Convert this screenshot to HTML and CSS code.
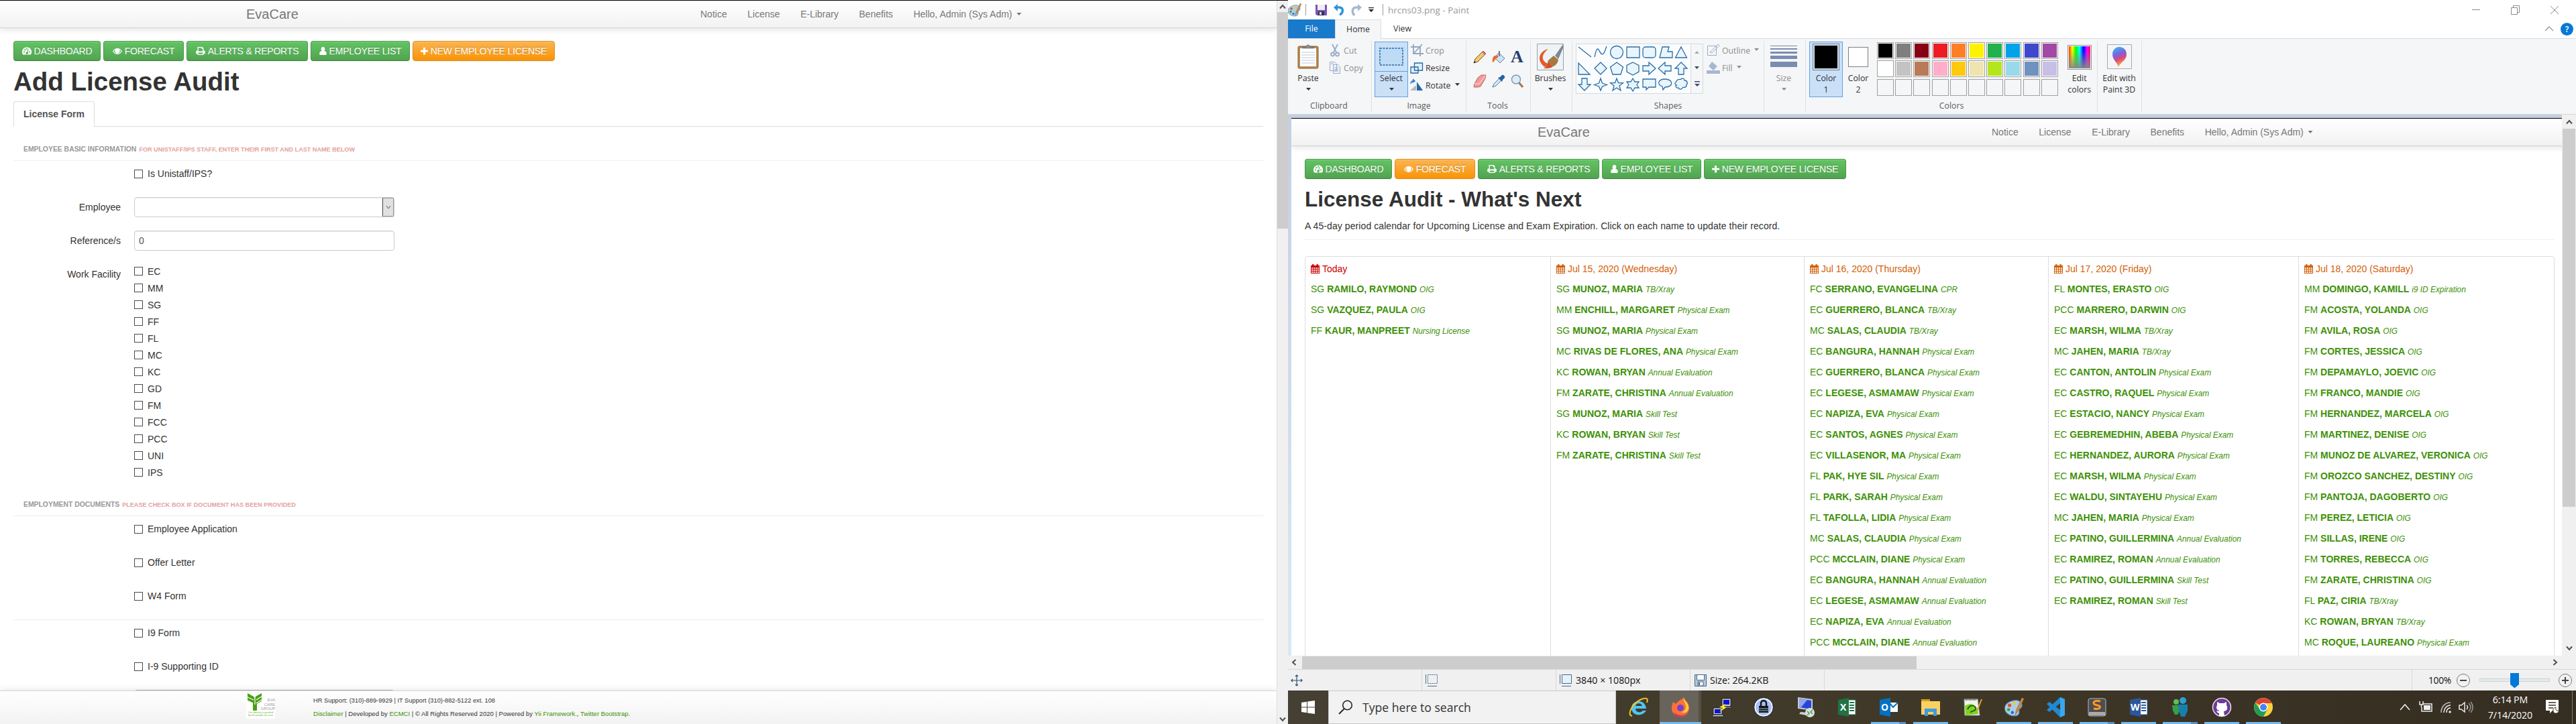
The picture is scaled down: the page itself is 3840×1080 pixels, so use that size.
FILE: index.html
```html
<!DOCTYPE html>
<html lang="en">
<head>
<meta charset="utf-8">
<title>EvaCare</title>
<link rel="stylesheet" href="styles.css">
</head>
<body>
<svg class="defs" width="0" height="0">
  <symbol id="i-dash" viewBox="0 0 14 14"><path fill="currentColor" fill-rule="evenodd" d="M7 1.5A7 7 0 0 0 1.2 12.500h11.600A7 7 0 0 0 7 1.500zM2 7.500h1.800v1.800H2zM3.300 4.300h1.900v1.900H3.300zM6.100 2.800h1.800v1.900H6.100zM10.200 7.500H12v1.800h-1.800zM8.900 4.100l1 .3-1.700 4.300a1.700 1.700 0 1 1-1-.3z"/></symbol>
  <symbol id="i-eye" viewBox="0 0 14 14"><path fill="currentColor" fill-rule="evenodd" d="M0 7.500C1.500 4.800 4 3 7 3s5.500 1.800 7 4.500C12.500 10.200 10 12 7 12S1.500 10.200 0 7.500zM1.300 7.500c1.200 2 3.200 3.400 5.700 3.400s4.500-1.400 5.700-3.400c-.7-1.200-1.600-2.100-2.700-2.700a3.700 3.700 0 1 1-6 0C2.900 5.400 2 6.300 1.300 7.500z"/></symbol>
  <symbol id="i-print" viewBox="0 0 14 14"><path fill="currentColor" fill-rule="evenodd" d="M2.500 1h7l2 2v3.500h.8c.9 0 1.500.6 1.500 1.500v3.300h-2.300V13h-9v-1.700H.2V8c0-.9.6-1.500 1.500-1.500h.8zM3.800 2.200v5.200h6.400V4H8.500V2.200zM3.800 9.500v2.300h6.400V9.500z"/></symbol>
  <symbol id="i-user" viewBox="0 0 11 14"><path fill="currentColor" d="M5.500 1C7.400 1 8.300 2.300 8.300 4c0 1.300-.5 2.400-1.200 3C9.500 7.200 10.800 8.600 10.800 11c0 1.400-.6 2-1.800 2H2C.8 13 .2 12.400.2 11 .2 8.600 1.500 7.200 3.900 7 3.200 6.400 2.700 5.300 2.700 4c0-1.700.9-3 2.800-3z"/></symbol>
  <symbol id="i-plus" viewBox="0 0 11 14"><path fill="currentColor" d="M4 2h3v3.800h4v2.800H7v3.900H4V8.600H0V5.800h4z"/></symbol>
  <symbol id="i-cal" viewBox="0 0 13 14"><path fill="currentColor" fill-rule="evenodd" d="M0 2h2V.3h2.600V2h3.800V.3H11V2h2v12H0zM1.100 5.200v1.900h2V5.200zm3 0v1.900h2V5.200zm3 0v1.900h2V5.200zm3 0v1.900h1.800V5.200zM1.100 8v2h2V8zm3 0v2h2V8zm3 0v2h2V8zm3 0v2h1.800V8zM1.100 11v2h2v-2zm3 0v2h2v-2zm3 0v2h2v-2zm3 0v2h1.800v-2z"/></symbol>
  <symbol id="i-up" viewBox="0 0 10 8"><path d="M1 6.500 5 2l4 4.500" fill="none" stroke="#505050" stroke-width="2"/></symbol>
  <symbol id="i-down" viewBox="0 0 10 8"><path d="M1 1.500 5 6l4-4.500" fill="none" stroke="#505050" stroke-width="2"/></symbol>
  <symbol id="i-tri" viewBox="0 0 7 4"><path d="M0 0h7L3.500 4z" fill="currentColor"/></symbol>
  <symbol id="i-palette" viewBox="0 0 20 20"><path d="M9 3c5-1 9 1 9 5 0 3-3 3-3 5s1 6-5 6S0 15 0 11s4-7 9-8z" fill="#a9cfe8" stroke="#5d8cad" stroke-width=".8"/><circle cx="5" cy="8" r="1.800" fill="#e64b2c"/><circle cx="10" cy="6" r="1.700" fill="#f3c832"/><circle cx="4" cy="12.500" r="1.700" fill="#3aa14a"/><circle cx="8" cy="15.500" r="1.600" fill="#3b63c9"/><path d="M18 0l2 1-6 13-3 4 1-5z" fill="#d58a3f" stroke="#8d5a2a" stroke-width=".4"/></symbol>
</svg>

<div class="desktop">
<section class="monitor left">
  <div class="page">
    <header class="navbar">
      <span class="brand">EvaCare</span>
      <nav class="menu"><a>Notice</a><a>License</a><a>E-Library</a><a>Benefits</a><a>Hello, Admin (Sys Adm)<svg class="caret"><use href="#i-tri"/></svg></a></nav>
    </header>
    <main class="content">
      <div class="buttons">
        <a class="btn b1"><svg class="fa"><use href="#i-dash"/></svg>DASHBOARD</a>
        <a class="btn b2"><svg class="fa"><use href="#i-eye"/></svg>FORECAST</a>
        <a class="btn b3"><svg class="fa"><use href="#i-print"/></svg>ALERTS &amp; REPORTS</a>
        <a class="btn b4"><svg class="fa narrow"><use href="#i-user"/></svg>EMPLOYEE LIST</a>
        <a class="btn b5 warn"><svg class="fa narrow"><use href="#i-plus"/></svg>NEW EMPLOYEE LICENSE</a>
      </div>
      <h1>Add License Audit</h1>
      <div class="tabs"><a class="tab">License Form</a></div>
      <div class="legend">EMPLOYEE BASIC INFORMATION <small>FOR UNISTAFF/IPS STAFF, ENTER THEIR FIRST AND LAST NAME BELOW</small></div>
      <div class="check first"><i></i>Is Unistaff/IPS?</div>
      <div class="field"><label>Employee</label><div class="input select"><span class="drop"><svg><path d="M1 2l3 4 3-4" fill="none" stroke="#555"/></svg></span></div></div>
      <div class="field"><label>Reference/s</label><div class="input">0</div></div>
      <div class="facility">
        <label>Work Facility</label>
        <div class="options">
          <div class="check"><i></i>EC</div><div class="check"><i></i>MM</div><div class="check"><i></i>SG</div><div class="check"><i></i>FF</div><div class="check"><i></i>FL</div><div class="check"><i></i>MC</div><div class="check"><i></i>KC</div><div class="check"><i></i>GD</div><div class="check"><i></i>FM</div><div class="check"><i></i>FCC</div><div class="check"><i></i>PCC</div><div class="check"><i></i>UNI</div><div class="check"><i></i>IPS</div>
        </div>
      </div>
      <div class="legend second">EMPLOYMENT DOCUMENTS <small>PLEASE CHECK BOX IF DOCUMENT HAS BEEN PROVIDED</small></div>
      <div class="docs">
        <div class="check"><i></i>Employee Application</div>
        <div class="check"><i></i>Offer Letter</div>
        <div class="check"><i></i>W4 Form</div>
      </div>
      <div class="docs after">
        <div class="check"><i></i>I9 Form</div>
        <div class="check"><i></i>I-9 Supporting ID</div>
        <div class="input"></div>
      </div>
    </main>
    <footer class="footer">
      <div class="logo">
        <svg width="26" height="28" viewBox="0 0 26 28"><path d="M10 28V17L2 14V2l9 5 2 3 1-3 9-5v12l-7 4v10z" fill="#4c9e17"/><path d="M10 17l-8-4M11 12 2 8M15 17l8-5M15 12l8-5M13 9v10" stroke="#fff" stroke-width="1.200" fill="none"/></svg>
        <span class="logoname">EVA<br>CARE<br>GROUP</span>
        <span class="motto">Our identity is granted<br>by the people we care</span>
      </div>
      <div class="credits">
        <p class="support">HR Support: (310)-889-9929 | IT Support (310)-882-5122 ext. 108</p>
        <p><a>Disclaimer</a> | Developed by <a>ECMCI</a> | © All Rights Reserved 2020 | Powered by <a>Yii Framework.</a>, <a>Twitter Bootstrap.</a></p>
      </div>
    </footer>
  </div>
  <div class="vscroll browser"><svg><use href="#i-up"/></svg><b></b><svg><use href="#i-down"/></svg></div>
</section>

<section class="monitor right">
  <div class="titlebar">
    <svg width="20" height="20"><use href="#i-palette"/></svg>
    <i class="bar"></i>
    <svg class="save" width="17" height="16" viewBox="0 0 17 16"><path d="M0 0h17v16H2l-2-2z" fill="#7a55b5"/><path d="M3 0h11v8H3z" fill="#eee"/><path d="M4 10h9v6H4z" fill="#35305a"/><path d="M6 11h3v4H6z" fill="#ddd"/></svg>
    <svg class="undo" width="17" height="18" viewBox="0 0 17 18"><path d="M4 5h4c7 0 7 8 1 11" fill="none" stroke="#2c93dd" stroke-width="3.500"/><path d="M0 5 6 0v11z" fill="#2c93dd"/></svg>
    <svg class="redo" width="17" height="18" viewBox="0 0 17 18"><path d="M13 5H9C2 5 2 13 6 17" fill="none" stroke="#a9b8cf" stroke-width="3.500"/><path d="M17 5 11 0v11z" fill="#a9b8cf"/></svg>
    <svg class="more" width="8" height="7" viewBox="0 0 8 7"><path d="M0 0h8v1.200H0zM0 3h8L4 7z" fill="#222"/></svg>
    <i class="bar"></i>
    <span class="title">hrcns03.png - Paint</span>
    <svg class="winctl" width="130" height="14" viewBox="0 0 130 14" fill="none" stroke="#8b8b8b"><path d="M0 6.500h12M58.500 3.500h9v10h-9zM61.500 3V.5h9v10H68M117 1l12 12M129 1l-12 12"/></svg>
  </div>
  <div class="ribbontabs">
    <span class="rt file">File</span><span class="rt home">Home</span><span class="rt view">View</span>
    <svg class="collapse" width="14" height="8"><path d="M1 7l6-6 6 6" fill="none" stroke="#999" stroke-width="1.300"/></svg>
    <span class="help">?</span>
  </div>
  <div class="ribbon">
    <div class="group g-clip">
      <div class="tools">
        <div class="big w50"><span class="pic"><svg width="32" height="38" viewBox="0 0 32 38"><rect x="1" y="3" width="30" height="33" rx="2" fill="#b98a55" stroke="#86602f"/><path d="M4 6h24v27H4z" fill="#fff"/><path d="M6 12h20M6 16h20M6 20h20M6 24h20M6 28h20" stroke="#b8c8dc"/><path d="M8 6V4h5c0-4 6-4 6 0h5v2z" fill="#8b8f95" stroke="#555" stroke-width=".6"/></svg></span>Paste<svg class="tri"><use href="#i-tri"/></svg></div>
        <div class="stack off">
          <span><svg width="20" height="20" viewBox="0 0 20 20" fill="none" stroke="#9aabc8" stroke-width="1.800"><path d="M6 1l6 12M14 1 8 13"/><circle cx="6.500" cy="16" r="2.500"/><circle cx="13.500" cy="16" r="2.500"/></svg>Cut</span>
          <span><svg width="20" height="20" viewBox="0 0 20 20" fill="#f1f5fb" stroke="#9aabc8"><path d="M2.500 1.500h7l3 3v10h-10zM7.500 5.500h7l3 3v10h-10z"/><path d="M9 10h6M9 12.500h6M9 15h6M4 4h4"/></svg>Copy</span>
        </div>
      </div>
      <div class="caption">Clipboard</div>
    </div>
    <div class="group g-image">
      <div class="tools">
        <div class="big w50 active"><span class="pic split"><svg width="37" height="28"><rect x="1" y="1" width="34" height="25" fill="#bedbf5" stroke="#1c68a8" stroke-width="1.500" stroke-dasharray="3 1.500"/></svg></span>Select<svg class="tri"><use href="#i-tri"/></svg></div>
        <div class="stack">
          <span class="off"><svg width="20" height="20" viewBox="0 0 20 20" fill="none" stroke="#93a5c4" stroke-width="1.800"><path d="M5 1v14h15M1 5h14v14M6 14 18 1"/></svg>Crop</span>
          <span><svg width="20" height="20" viewBox="0 0 20 20" fill="#dff0fb" stroke="#2469a5" stroke-width="1.300"><path d="M1 9h11v9H1zM6.500 3h12v11h-12z"/></svg>Resize</span>
          <span><svg width="20" height="20" viewBox="0 0 20 20"><path d="M0 18h9V10z" fill="#bbb"/><path d="M10 18h9L10 5z" fill="#1d6ba8"/><path d="M1 8c0-4 3-5 5-4M4 1l3 3-4 2" fill="none" stroke="#2b7bd2" stroke-width="1.500"/></svg>Rotate<svg class="tri side"><use href="#i-tri"/></svg></span>
        </div>
      </div>
      <div class="caption">Image</div>
    </div>
    <div class="group g-tools">
      <div class="toolgrid">
        <svg viewBox="0 0 20 20"><path d="M1 19l2-6L15 1l4 4L7 17z" fill="#f4c869" stroke="#6b5230"/><path d="M15 1l4 4-2 2-4-4z" fill="#dc6c63"/><path d="M1 19l1-3 2 2z" fill="#222"/></svg>
        <svg viewBox="0 0 20 20"><path d="M10 4l9 8-7 7-8-8z" fill="#cfe3f2" stroke="#5e7f9d"/><path d="M9 8c-6-1-9 2-8 10 3 0 3-6 8-7z" fill="#ea6a2e"/><path d="M11 9V1" stroke="#6b7b90" stroke-width="2"/></svg>
        <span class="glyph">A</span>
        <svg viewBox="0 0 20 20"><path d="M7 5 12 1h7l-1 5-7 12-4 1H1l1-5z" fill="#ee9a97" stroke="#c8615f"/><path d="M2 14h7l9-12" fill="none" stroke="#f9c9c7" stroke-width="1.500"/></svg>
        <svg viewBox="0 0 20 20"><path d="M1 19l2-5 8-8 3 3-8 8z" fill="#d7e6f2" stroke="#587896"/><path d="M9 5l6 6 1-3 3-3c1-2-2-5-4-4l-3 3z" fill="#24659d"/></svg>
        <svg viewBox="0 0 20 20"><path d="M12 12l6 7" stroke="#a77448" stroke-width="3"/><circle cx="8" cy="7.500" r="6.500" fill="#d8ecfa" stroke="#8d99a8" stroke-width="1.500"/></svg>
      </div>
      <div class="caption">Tools</div>
    </div>
    <div class="group g-brush">
      <div class="tools"><div class="big w58"><span class="pic"><svg width="40" height="40" viewBox="0 0 40 40"><path d="M.5.500h39v39H.5z" fill="#eef3f7" stroke="#9aa0a6"/><path d="M17 8C4 11-2 25 12 35l6-4C3 25 9 14 17 8z" fill="#e4592b"/><path d="M39 1 27 18l5 5 7-16z" fill="#7d8894"/><path d="M25 18l7 6c-1 8-9 13-22 13 6-3 5-7 7-12z" fill="#a97842"/><path d="M10 37c6-2 6-5 7-9l6 7c-3 2-8 2-13 2z" fill="#de4b24"/></svg></span>Brushes<svg class="tri"><use href="#i-tri"/></svg></div></div>
    </div>
    <div class="group g-shapes">
      <div class="tools">
        <div class="gallery">
          <svg width="170" height="73" viewBox="0 0 170 73" fill="#e9f5fc" stroke="#2b6ea6" stroke-width="1.300">
            <path d="M3 4l19 15M27 19c4-20 6-10 9-6s5 2 9-10" fill="none"/><circle cx="60" cy="12" r="9.500"/><path d="M75 4h19v16H75z"/><rect x="99" y="4" width="19" height="16" rx="4"/><path d="M128 4h10l-2 7h7v9h-19zM156 4l8.500 16h-17z"/>
            <path d="M3 28v17h17zM36 27l9 9-9 9-9-9zM60 27l9.500 7-3.500 11H54l-3.500-11zM84 27l9 4.500v9.500l-9 5-9-5v-9.500zM99 32h9v-5l10 9-10 9v-5h-9zM141 32h-9v-5l-10 9 10 9v-5h9zM156 27l9 9h-5v9h-8v-9h-5z"/>
            <path d="M8 51h8v9h5l-9 9-9-9h5zM36 51l2.500 7 7 2.500-7 2.500-2.500 6-2.500-6-7-2.500 7-2.500zM60 51l2.500 6.500 7 .2-5.500 4.300 2 7-6-4-6 4 2-7-5.500-4.300 7-.2zM84 51l3 5h6l-3 4.500 3 4.500h-6l-3 5-3-5h-6l3-4.500-3-4.500h6zM99 52h19v12h-10l-4 4v-4h-5zM132 52c13 0 13 12 0 12l-3 4-1-5c-9-3-6-11 4-11zM149 56c0-5 6-3 7-4 2-2 5-1 5 2 5 0 5 5 3 6 1 4-3 5-5 4-2 4-6 4-7 1-5 1-4-4-3-4-3-2-3-4 0-5z"/>
          </svg>
          <span class="gscroll"><svg class="up"><use href="#i-tri"/></svg><svg class="tri"><use href="#i-tri"/></svg><svg width="8" height="8" viewBox="0 0 8 8"><path d="M0 0h8v1.500H0zM0 4h8L4 8z" fill="#3c4c68"/></svg></span>
        </div>
        <div class="stack off outline">
          <span><svg width="20" height="20" viewBox="0 0 20 20" fill="none" stroke="#9caccb"><path d="M1.500 3.500h13v14h-13zM5 13 17 1l2 2L8 14z"/></svg>Outline<svg class="tri side"><use href="#i-tri"/></svg></span>
          <span><svg width="20" height="20" viewBox="0 0 20 20" fill="#a8b6d2"><path d="M8 1l8 7-6 6-7-6zM0 14h20v5H0z"/></svg>Fill<svg class="tri side"><use href="#i-tri"/></svg></span>
        </div>
      </div>
      <div class="caption">Shapes</div>
    </div>
    <div class="group g-size">
      <div class="tools"><div class="big w58 off"><span class="pic"><svg width="40" height="36"><path d="M0 1h40v1H0zM0 5h40v2H0zM0 10h40v3H0zM0 16h40v5H0zM0 25h40v8H0z" fill="#7a8cb0"/></svg></span>Size<svg class="tri"><use href="#i-tri"/></svg></div></div>
    </div>
    <div class="group g-colors">
      <div class="tools">
        <div class="big w50 active"><span class="pic"><i class="sw color1"></i></span>Color<em>1</em></div>
        <div class="big w46"><span class="pic"><i class="sw color2"></i></span>Color<em>2</em></div>
        <div class="palette">
          <i style="background-color:#000"></i><i style="background-color:#7f7f7f"></i><i style="background-color:#880015"></i><i style="background-color:#ed1c24"></i><i style="background-color:#ff7f27"></i><i style="background-color:#fff200"></i><i style="background-color:#22b14c"></i><i style="background-color:#00a2e8"></i><i style="background-color:#3f48cc"></i><i style="background-color:#a349a4"></i>
          <i style="background-color:#fff"></i><i style="background-color:#c3c3c3"></i><i style="background-color:#b97a57"></i><i style="background-color:#ffaec9"></i><i style="background-color:#ffc90e"></i><i style="background-color:#efe4b0"></i><i style="background-color:#b5e61d"></i><i style="background-color:#99d9ea"></i><i style="background-color:#7092be"></i><i style="background-color:#c8bfe7"></i>
          <i class="e"></i><i class="e"></i><i class="e"></i><i class="e"></i><i class="e"></i><i class="e"></i><i class="e"></i><i class="e"></i><i class="e"></i><i class="e"></i>
        </div>
        <div class="big w46"><span class="pic"><i class="rainbow"></i></span>Edit<em>colors</em></div>
      </div>
      <div class="caption">Colors</div>
    </div>
    <div class="group g-3d">
      <div class="tools"><div class="big w60"><span class="pic"><svg width="37" height="38" viewBox="0 0 37 38"><defs><linearGradient id="drop" x1="0" y1="0" x2=".3" y2="1"><stop offset="0" stop-color="#35c3f4"/><stop offset=".45" stop-color="#7a62dd"/><stop offset=".7" stop-color="#e24680"/><stop offset="1" stop-color="#f6b52e"/></linearGradient></defs><path d="M.5.500h36v36H.5z" fill="#f4f5f6" stroke="#a8acb0"/><path d="M18 4c7 0 11 5 11 11 0 8-6 10-13 19 1-6-8-10-8-19C8 9 12 4 18 4z" fill="url(#drop)"/></svg></span>Edit with<em>Paint 3D</em></div></div>
    </div>
  </div>

  <div class="workspace">
    <div class="picture">
      <div class="page">
        <header class="navbar">
          <span class="brand">EvaCare</span>
          <nav class="menu"><a>Notice</a><a>License</a><a>E-Library</a><a>Benefits</a><a>Hello, Admin (Sys Adm)<svg class="caret"><use href="#i-tri"/></svg></a></nav>
        </header>
        <main class="content">
          <div class="buttons">
            <a class="btn b1"><svg class="fa"><use href="#i-dash"/></svg>DASHBOARD</a>
            <a class="btn b2 warn"><svg class="fa"><use href="#i-eye"/></svg>FORECAST</a>
            <a class="btn b3"><svg class="fa"><use href="#i-print"/></svg>ALERTS &amp; REPORTS</a>
            <a class="btn b4"><svg class="fa narrow"><use href="#i-user"/></svg>EMPLOYEE LIST</a>
            <a class="btn b5"><svg class="fa narrow"><use href="#i-plus"/></svg>NEW EMPLOYEE LICENSE</a>
          </div>
          <h2>License Audit - What's Next</h2>
          <p class="lead">A 45-day period calendar for Upcoming License and Exam Expiration. Click on each name to update their record.</p>
          <div class="calendar">
            <div class="day">
              <h3 class="today"><svg class="cal"><use href="#i-cal"/></svg>Today</h3>
              <p>SG <b>RAMILO, RAYMOND</b> <em>OIG</em></p>
              <p>SG <b>VAZQUEZ, PAULA</b> <em>OIG</em></p>
              <p>FF <b>KAUR, MANPREET</b> <em>Nursing License</em></p>
            </div>
            <div class="day">
              <h3><svg class="cal"><use href="#i-cal"/></svg>Jul 15, 2020 (Wednesday)</h3>
              <p>SG <b>MUNOZ, MARIA</b> <em>TB/Xray</em></p>
              <p>MM <b>ENCHILL, MARGARET</b> <em>Physical Exam</em></p>
              <p>SG <b>MUNOZ, MARIA</b> <em>Physical Exam</em></p>
              <p>MC <b>RIVAS DE FLORES, ANA</b> <em>Physical Exam</em></p>
              <p>KC <b>ROWAN, BRYAN</b> <em>Annual Evaluation</em></p>
              <p>FM <b>ZARATE, CHRISTINA</b> <em>Annual Evaluation</em></p>
              <p>SG <b>MUNOZ, MARIA</b> <em>Skill Test</em></p>
              <p>KC <b>ROWAN, BRYAN</b> <em>Skill Test</em></p>
              <p>FM <b>ZARATE, CHRISTINA</b> <em>Skill Test</em></p>
            </div>
            <div class="day">
              <h3><svg class="cal"><use href="#i-cal"/></svg>Jul 16, 2020 (Thursday)</h3>
              <p>FC <b>SERRANO, EVANGELINA</b> <em>CPR</em></p>
              <p>EC <b>GUERRERO, BLANCA</b> <em>TB/Xray</em></p>
              <p>MC <b>SALAS, CLAUDIA</b> <em>TB/Xray</em></p>
              <p>EC <b>BANGURA, HANNAH</b> <em>Physical Exam</em></p>
              <p>EC <b>GUERRERO, BLANCA</b> <em>Physical Exam</em></p>
              <p>EC <b>LEGESE, ASMAMAW</b> <em>Physical Exam</em></p>
              <p>EC <b>NAPIZA, EVA</b> <em>Physical Exam</em></p>
              <p>EC <b>SANTOS, AGNES</b> <em>Physical Exam</em></p>
              <p>EC <b>VILLASENOR, MA</b> <em>Physical Exam</em></p>
              <p>FL <b>PAK, HYE SIL</b> <em>Physical Exam</em></p>
              <p>FL <b>PARK, SARAH</b> <em>Physical Exam</em></p>
              <p>FL <b>TAFOLLA, LIDIA</b> <em>Physical Exam</em></p>
              <p>MC <b>SALAS, CLAUDIA</b> <em>Physical Exam</em></p>
              <p>PCC <b>MCCLAIN, DIANE</b> <em>Physical Exam</em></p>
              <p>EC <b>BANGURA, HANNAH</b> <em>Annual Evaluation</em></p>
              <p>EC <b>LEGESE, ASMAMAW</b> <em>Annual Evaluation</em></p>
              <p>EC <b>NAPIZA, EVA</b> <em>Annual Evaluation</em></p>
              <p>PCC <b>MCCLAIN, DIANE</b> <em>Annual Evaluation</em></p>
            </div>
            <div class="day">
              <h3><svg class="cal"><use href="#i-cal"/></svg>Jul 17, 2020 (Friday)</h3>
              <p>FL <b>MONTES, ERASTO</b> <em>OIG</em></p>
              <p>PCC <b>MARRERO, DARWIN</b> <em>OIG</em></p>
              <p>EC <b>MARSH, WILMA</b> <em>TB/Xray</em></p>
              <p>MC <b>JAHEN, MARIA</b> <em>TB/Xray</em></p>
              <p>EC <b>CANTON, ANTOLIN</b> <em>Physical Exam</em></p>
              <p>EC <b>CASTRO, RAQUEL</b> <em>Physical Exam</em></p>
              <p>EC <b>ESTACIO, NANCY</b> <em>Physical Exam</em></p>
              <p>EC <b>GEBREMEDHIN, ABEBA</b> <em>Physical Exam</em></p>
              <p>EC <b>HERNANDEZ, AURORA</b> <em>Physical Exam</em></p>
              <p>EC <b>MARSH, WILMA</b> <em>Physical Exam</em></p>
              <p>EC <b>WALDU, SINTAYEHU</b> <em>Physical Exam</em></p>
              <p>MC <b>JAHEN, MARIA</b> <em>Physical Exam</em></p>
              <p>EC <b>PATINO, GUILLERMINA</b> <em>Annual Evaluation</em></p>
              <p>EC <b>RAMIREZ, ROMAN</b> <em>Annual Evaluation</em></p>
              <p>EC <b>PATINO, GUILLERMINA</b> <em>Skill Test</em></p>
              <p>EC <b>RAMIREZ, ROMAN</b> <em>Skill Test</em></p>
            </div>
            <div class="day">
              <h3><svg class="cal"><use href="#i-cal"/></svg>Jul 18, 2020 (Saturday)</h3>
              <p>MM <b>DOMINGO, KAMILL</b> <em>i9 ID Expiration</em></p>
              <p>FM <b>ACOSTA, YOLANDA</b> <em>OIG</em></p>
              <p>FM <b>AVILA, ROSA</b> <em>OIG</em></p>
              <p>FM <b>CORTES, JESSICA</b> <em>OIG</em></p>
              <p>FM <b>DEPAMAYLO, JOEVIC</b> <em>OIG</em></p>
              <p>FM <b>FRANCO, MANDIE</b> <em>OIG</em></p>
              <p>FM <b>HERNANDEZ, MARCELA</b> <em>OIG</em></p>
              <p>FM <b>MARTINEZ, DENISE</b> <em>OIG</em></p>
              <p>FM <b>MUNOZ DE ALVAREZ, VERONICA</b> <em>OIG</em></p>
              <p>FM <b>OROZCO SANCHEZ, DESTINY</b> <em>OIG</em></p>
              <p>FM <b>PANTOJA, DAGOBERTO</b> <em>OIG</em></p>
              <p>FM <b>PEREZ, LETICIA</b> <em>OIG</em></p>
              <p>FM <b>SILLAS, IRENE</b> <em>OIG</em></p>
              <p>FM <b>TORRES, REBECCA</b> <em>OIG</em></p>
              <p>FM <b>ZARATE, CHRISTINA</b> <em>OIG</em></p>
              <p>FL <b>PAZ, CIRIA</b> <em>TB/Xray</em></p>
              <p>KC <b>ROWAN, BRYAN</b> <em>TB/Xray</em></p>
              <p>MC <b>ROQUE, LAUREANO</b> <em>Physical Exam</em></p>
            </div>
          </div>
        </main>
      </div>
    </div>
    <div class="vscroll paint"><svg><use href="#i-up"/></svg><b></b><svg><use href="#i-down"/></svg></div>
  </div>
  <div class="hscroll"><svg class="l"><use href="#i-up"/></svg><b></b><svg class="r"><use href="#i-up"/></svg></div>
  <div class="status">
    <div class="cell c1"><svg width="18" height="18" viewBox="0 0 18 18" fill="none" stroke="#34516f" stroke-width="1.200"><path d="M9 1v16M1 9h16M7 3l2-2 2 2M7 15l2 2 2-2M3 7 1 9l2 2M15 7l2 2-2 2"/></svg></div>
    <div class="cell"><svg width="20" height="18" viewBox="0 0 20 18" fill="none" stroke="#4a6b8d"><path d="M1.500 0v14M4 17.500h14"/><path d="M4.500.500h14v13h-14z" stroke-dasharray="2 1"/></svg></div>
    <div class="cell"><svg width="20" height="18" viewBox="0 0 20 18" fill="#e6f1fa" stroke="#4a6b8d"><path d="M1.500 0v14M4 17.500h14"/><path d="M4.500.500h14v13h-14z"/></svg>3840 × 1080px</div>
    <div class="cell c4"><svg width="18" height="18" viewBox="0 0 18 18" fill="#b4c9dc" stroke="#456789"><path d="M.5.500h17v17H.5z"/><path d="M3.500.500h11v8h-11zM5 11h8v6H5z" fill="#fff"/><path d="M7 12v4" stroke-width="2"/></svg>Size: 264.2KB</div>
    <div class="cell c5"></div>
    <div class="zoom">100%
      <svg width="174" height="26" viewBox="0 0 174 26"><g fill="#f2f2f2" stroke="#777"><circle cx="11" cy="13" r="9.500"/><circle cx="163" cy="13" r="9.500"/></g><path d="M6 13h10M158 13h10M163 8v10" stroke="#444" stroke-width="2"/><path d="M35.500 10.500h104v4h-104z" fill="#e5eaea" stroke="#ccd2d2"/><path d="M81 2h13v17l-6.500 5.500L81 19z" fill="#0078d7"/></svg>
    </div>
  </div>
  <div class="taskbar">
    <div class="start"><svg width="20" height="20" viewBox="0 0 20 20"><path d="M0 3l8-1.200v7.700H0zM9 1.600 20 0v9.500H9zM0 10.500h8v7.700L0 17zM9 10.500h11V20L9 18.400z" fill="#fff"/></svg></div>
    <div class="search"><svg width="22" height="22" viewBox="0 0 22 22"><circle cx="13.500" cy="8" r="6.800" fill="none" stroke="#222" stroke-width="1.600"/><path d="M9 13l-8 8" stroke="#222" stroke-width="1.800"/></svg>Type here to search</div>
    <div class="apps">
      <span class="app"><svg viewBox="0 0 30 30"><path d="M26 17H10c0 6 8 7 11 3h5C20 30 4 28 4 16S24 1 26 17zM10 13h10c-1-5-9-5-10 0z" fill="#4fc6f4"/><path d="M5 28C-4 27 6 8 19 3c8-3 10-1 8 5" fill="none" stroke="#f3c322" stroke-width="2"/></svg></span>
      <span class="app hot"><svg viewBox="0 0 30 30"><path d="M15 4c4-1 4-4 5-4 0 4 8 7 8 16 0 7-6 13-13 13S2 24 2 17c0-5 1-6 2-10l4 3 4-4z" fill="#ff7139"/><path d="M20 1c-1 4 2 7 3 11 1 6-2 10-7 10 8 4 12-3 11-8-1-6-5-7-7-13z" fill="#ffce3d"/><path d="M5 22c5 6 15 7 20 0-3 7-17 11-20 0z" fill="#e8265e"/><circle cx="15" cy="16" r="5" fill="#7542c8"/></svg></span>
      <span class="app"><svg viewBox="0 0 30 30"><g fill="#ccc" stroke="#222"><path d="M15 2h13v12H15zM14 14h14l2 2H17zM2 16h13v10H2zM1 26h15l2 3H1z"/></g><path d="M17 4h9v7h-9zM4 18h9v6H4z" fill="#0b12d8"/><path d="M20 10l-9 5 5 1-5 6 11-7-4-1z" fill="#ffee24"/></svg></span>
      <span class="app"><svg viewBox="0 0 30 30"><circle cx="15" cy="15" r="13" fill="#a8c0f6" stroke="#fff" stroke-width="2"/><circle cx="15" cy="15" r="14.300" fill="none" stroke="#234"/><path d="M11 14V9c0-5 8-5 8 0v5" fill="none" stroke="#14161c" stroke-width="2.500"/><path d="M8 13h14v10H8z" fill="#14161c"/><path d="M8 17h14M8 20h14" stroke="#9bb"/></svg></span>
      <span class="app"><svg viewBox="0 0 30 30"><path d="M4 0l22 3v17L4 17z" fill="#c4c7cc"/><path d="M6 2l18 3v13L6 15z" fill="#2746d6"/><path d="M6 2l12 2-9 11-3-.5z" fill="#91a5f3"/><path d="M8 22l11 1 2 5-15-3z" fill="#ccc"/><circle cx="22" cy="23" r="7" fill="#dedede"/><path d="M18 21l3 3-3 3M26 19l-3 3 3 3" fill="none" stroke="#3ba547" stroke-width="1.500"/></svg></span>
      <span class="app"><svg viewBox="0 0 30 30"><path d="M16 4h12v22H16z" fill="#fff" stroke="#207245"/><path d="M19 8h7M19 12h7M19 16h7M19 20h7" stroke="#207245" stroke-width="2"/><path d="M2 4l16-3v28L2 26z" fill="#207245"/><text x="5" y="20" class="ico">X</text></svg></span>
      <span class="app on multi"><svg viewBox="0 0 30 30"><path d="M16 8h13v14H16z" fill="#fff"/><path d="M16 8l6 7 7-7" fill="none" stroke="#0072c6" stroke-width="2"/><path d="M2 4l16-3v28L2 26z" fill="#0072c6"/><text x="4" y="20" class="ico">O</text></svg></span>
      <span class="app on"><svg viewBox="0 0 30 30"><path d="M1 3h13v4H1z" fill="#dd9a0e"/><path d="M1 6h28v20H1z" fill="#fbd062"/><path d="M6 28V17h18v11h-5v-6h-8v6z" fill="#3f9bdc"/></svg></span>
      <span class="app"><svg viewBox="0 0 30 30"><path d="M3 3h20l3 24H4z" fill="#edf3e8" stroke="#aaa"/><path d="M4 4h18" stroke="#555" stroke-width="2" stroke-dasharray="1 1"/><path d="M4 13c10-7 20 0 20 12l-19 2z" fill="#7ed321"/><path d="M8 18c4-8 12-6 12-1s-8 3-7 6" fill="none" stroke="#235d1b" stroke-width="2"/><path d="M29 3l-7 18" stroke="#eaa02a" stroke-width="2"/></svg></span>
      <span class="app on"><svg viewBox="-1 0 21 20"><use href="#i-palette" width="20" height="20"/></svg></span>
      <span class="app on"><svg viewBox="0 0 30 30"><path d="M22 0l7 3v24l-7 3L2 10l4-3 16 12V9L6 22l-4-3z" fill="#1f8ad2"/><path d="M22 0l7 3v24l-7 3z" fill="#3ba7ee"/></svg></span>
      <span class="app on multi"><svg viewBox="0 0 30 30"><rect x="2" y="2" width="26" height="26" rx="3" fill="#4e4e50" stroke="#b9b9b9"/><path d="M3 22h24v5H3z" fill="#aaa"/><path d="M20 6c-12-2-13 5-5 6s5 7-5 5" fill="none" stroke="#ff9a22" stroke-width="3"/></svg></span>
      <span class="app on"><svg viewBox="0 0 30 30"><path d="M16 4h12v22H16z" fill="#fff" stroke="#2b579a"/><path d="M19 8h7M19 12h7M19 16h7M19 20h7" stroke="#2b579a" stroke-width="2"/><path d="M2 4l16-3v28L2 26z" fill="#2b579a"/><text x="3" y="20" class="ico">W</text></svg></span>
      <span class="app on multi"><svg viewBox="0 0 30 30"><circle cx="9" cy="7" r="4" fill="#5cbf55"/><path d="M3 12h11v9l-3 5H7l-3-6z" fill="#379d49"/><circle cx="19" cy="5" r="5" fill="#2d9fd2"/><path d="M12 11h14v9l-4 9h-6l-3-9z" fill="#1680ad"/></svg></span>
      <span class="app on"><svg viewBox="0 0 30 30"><circle cx="15" cy="15" r="13.500" fill="#6e3b96" stroke="#e8e0ef" stroke-width="1.500"/><path d="M8 7l4 2h6l4-2v5c3 5 0 9-4 9l1 7h-8v-4c-3 0-3-3-4-4l4 1v-1c-4-1-5-5-3-8z" fill="#fff"/></svg></span>
      <span class="app on"><svg viewBox="0 0 30 30"><circle cx="15" cy="15" r="14" fill="#fdd23c"/><path d="M15 15 3 8a14 14 0 0 1 24.500 1H15z" fill="#dd4437"/><path d="M3 8a14 14 0 0 0 12 21l6-11-6 2-6-3z" fill="#1f9d58"/><circle cx="15" cy="15" r="6.500" fill="#fff"/><circle cx="15" cy="15" r="5" fill="#4385f5"/></svg></span>
    </div>
    <div class="tray">
      <svg width="112" height="24" viewBox="0 0 112 24" fill="none" stroke="#eee" stroke-width="1.500"><path d="M1 16l7-8 7 8"/><path d="M34 7h14v11H33v-6" /><path d="M36 9h10v7H36z" fill="#eee" stroke="none"/><path d="M30 3v5h5V3M32.500 8v4"/><path d="M62 20C62 11 68 5 76 5" stroke="#bbb"/><path d="M66 20c0-6 4-11 10-11M70 20c0-4 2-7 6-7"/><circle cx="75" cy="19" r="1"/><path d="M89 9h3l5-4v14l-5-4h-3zM100 9c2 2 2 4 0 6"/><path d="M103 6c4 4 4 8 0 12M106 4c4 5 4 11 0 16" stroke="#999"/></svg>
      <div class="clock">6:14 PM<br>7/14/2020</div>
      <svg class="action" width="20" height="22" viewBox="0 0 20 22"><path d="M0 0h19v16H10l-4 4v-4H0z" fill="#fff"/><path d="M4 4h11M4 8h11M4 12h7" stroke="#3a3225" stroke-width="1.500"/><path d="M15 11c-1 5 2 6 5 5-2 6-10 5-9-1 0-2 2-4 4-4z" fill="#fff" stroke="#3a3225"/></svg>
    </div>
  </div>
</section>
</div>
</body>
</html>
```
FILE: styles.css
```css
* { box-sizing: border-box; }
body { margin: 0; background: #fff; font-family: "Liberation Sans", Arial, sans-serif; font-size: 14px; color: #333; overflow: hidden; }
p, h1, h2, h3 { margin: 0; }
svg { display: block; flex: none; }
.defs { position: absolute; }
.desktop { display: flex; width: 3840px; height: 1080px; }
.monitor { width: 1920px; height: 1080px; overflow: hidden; }
.left { display: flex; border-top: 1px solid #000; }
.right { display: flex; flex-direction: column; font-family: "Open Sans", "Noto Sans", sans-serif; font-size: 12.3px; }

/* web page */
.page { position: relative; width: 1903px; font-family: "Liberation Sans", Arial, sans-serif; font-size: 14px; background: #fff; overflow: hidden; }
.left .page { height: 1079px; }
.navbar { display: flex; align-items: center; height: 41px; padding-left: 367px; border-bottom: 1px solid #d4d4d4; background: linear-gradient(#fff, #f2f2f2); box-shadow: 0 1px 10px rgba(0, 0, 0, .14); color: #777; }
.brand { width: 677px; font-size: 20px; }
.menu { display: flex; gap: 30.600px; }
.menu a { display: flex; align-items: center; white-space: nowrap; }
.caret { width: 8px; height: 4px; margin-left: 6px; }
.content { padding: 19px 20px 0; }
.buttons { display: flex; gap: 4px; }
.btn { display: flex; align-items: center; justify-content: center; height: 30px; gap: 4px; border: 1px solid #479a47; border-bottom-color: #398439; border-radius: 4px; background: linear-gradient(#62c462, #51a351); box-shadow: inset 0 1px 0 rgba(255, 255, 255, .2), 0 1px 2px rgba(0, 0, 0, .05); color: #fff; text-shadow: 0 -1px 0 rgba(0, 0, 0, .25); white-space: nowrap; letter-spacing: -.2px; }
.warn { border-color: #e18b17; background: linear-gradient(#fbb450, #f89406); }
.b1 { width: 130px; } .b2 { width: 120px; } .b3 { width: 181px; } .b4 { width: 148px; } .b5 { width: 212px; }
.fa { width: 14px; height: 14px; }
.fa.narrow { width: 11px; }
h1 { margin-top: 11px; font-size: 38.5px; line-height: 40px; }
h2 { margin-top: 10px; font-size: 31.5px; line-height: 40px; }
.tabs { display: flex; height: 38px; margin-top: 9px; border-bottom: 1px solid #ddd; }
.tab { width: 121px; height: 38px; border: 1px solid #ddd; border-bottom: 0; border-radius: 4px 4px 0 0; background: #fff; color: #555; font-weight: bold; line-height: 37px; text-align: center; }
.legend { display: flex; align-items: flex-end; gap: 4px; height: 51px; padding: 0 0 9px 15px; border-bottom: 1px solid #eee; color: #999; font-size: 10.4px; font-weight: bold; line-height: 14px; white-space: nowrap; }
.legend small { color: #e3a0a0; font-size: 9.1px; }
.second { height: 53px; }
.check { display: flex; align-items: center; height: 20px; gap: 7px; padding-left: 180px; line-height: 20px; }
.check i { width: 13px; height: 13px; border: 1px solid #4a4a4a; background: #fff; }
.first { margin: 9px 0 25px; }
.field { display: flex; gap: 20px; height: 30px; margin-bottom: 20px; }
label { width: 160px; line-height: 30px; text-align: right; }
.input { width: 388px; height: 30px; padding-left: 6px; border: 1px solid #ccc; border-radius: 4px; box-shadow: inset 0 1px 1px rgba(0, 0, 0, .075); color: #555; line-height: 28px; }
.select { display: flex; justify-content: flex-end; }
.drop { display: flex; align-items: center; justify-content: center; width: 17px; border: 1px solid #999; border-left-color: #444; background: #e1e1e1; }
.drop svg { width: 8px; height: 8px; }
.facility { display: flex; gap: 20px; margin-top: -2px; }
.facility label { padding-top: 2px; }
.options .check { height: 25px; padding-left: 0; }
.docs { display: flex; flex-direction: column; gap: 30px; height: 155px; padding-top: 9px; border-bottom: 1px solid #eee; }
.after { height: 200px; gap: 30px; padding-top: 9px; border: 0; }
.after .input { flex: none; margin: -5px 0 0 180px; border-color: #bbb; }
.footer { position: absolute; left: 0; right: 0; bottom: 0; display: flex; height: 50px; padding-left: 367px; border-top: 1px solid #d4d4d4; background: linear-gradient(#fff, #f2f2f2); box-shadow: 0 -1px 10px rgba(0, 0, 0, .1); font-size: 9.55px; }
.logo { display: grid; grid-template-columns: 21px 22px; grid-template-rows: 29px 10px; width: 43px; height: 40px; margin-top: 1px; background: #fff; }
.logoname { padding-top: 9px; color: #999; font-size: 5.8px; line-height: 6.5px; text-align: right; }
.motto { grid-column: 1 / 3; color: #6db03c; font-size: 3.8px; line-height: 4px; text-align: center; white-space: nowrap; }
.credits { padding: 4px 0 0 57px; white-space: nowrap; }
.credits p { line-height: 20px; }
.credits .support { font-size: 9.3px; }
.credits a { color: #3d9106; }
.lead { height: 32px; margin-top: 9px; border-bottom: 1px solid #eee; line-height: 22px; letter-spacing: .08px; }
.calendar { display: grid; grid-template-columns: 365px 378px 364px 373px 381px; height: 700px; margin-top: 24px; border: 1px solid #ddd; border-radius: 4px; }
.day { padding: 3px 0 0 8px; border-left: 1px solid #ddd; color: #3d9106; white-space: nowrap; }
.day:first-child { border-left: 0; }
.day h3 { display: flex; align-items: center; gap: 4px; height: 30px; color: #d2600a; font-size: 14px; font-weight: normal; }
.day h3.today { color: #c00; }
.cal { width: 13px; height: 14px; }
.day p { height: 31px; line-height: 31px; }
.day em { font-size: 11.9px; }

/* scrollbars */
.vscroll { display: flex; flex-direction: column; align-items: center; background: #f0f0f0; }
.vscroll b { width: 100%; background: #cdcdcd; }
.vscroll svg { width: 10px; height: 8px; }
.browser { width: 17px; height: 1079px; padding: 5px 0 3px; border-left: 1px solid #ddd; }
.browser b { height: 323px; margin: 4px 0 auto; }
.paint { width: 21px; padding: 7px 0; }
.paint b { height: 564px; margin: 6px 0 auto; width: 19px; }
.hscroll { display: flex; align-items: center; height: 20px; padding: 0 26px 0 4px; background: #f0f0f0; }
.hscroll svg { width: 10px; height: 8px; }
.hscroll b { width: 916px; height: 19px; margin: 0 auto 0 7px; background: #cdcdcd; }
.l { transform: rotate(-90deg); }
.r { transform: rotate(90deg); }

/* paint window */
.titlebar { display: flex; align-items: center; height: 29px; }
.titlebar .bar { width: 1px; height: 17px; background: #999; }
.titlebar > svg:first-child { margin-right: 6px; }
.save { margin: 0 10px 0 14px; }
.undo { margin-right: 8px; }
.redo { margin-right: 10px; }
.more { margin-right: 13px; }
.title { margin: 0 auto 0 7px; color: #999; font-size: 13.5px; }
.winctl { margin-right: 25px; }
.ribbontabs { display: flex; align-items: center; height: 29px; border-bottom: 1px solid #dadbdc; }
.rt { height: 28px; line-height: 28px; text-align: center; }
.file { width: 70px; background: #1979ca; color: #fff; }
.home { width: 69px; height: 29px; margin-bottom: -1px; border: 1px solid #dadbdc; border-bottom: 0; background: #f5f6f7; }
.view { width: 63px; }
.collapse { margin-left: auto; }
.help { width: 19px; height: 19px; margin: 0 4px 0 10px; border-radius: 50%; background: #0878d4; color: #fff; font-weight: 600; line-height: 19px; text-align: center; }
.ribbon { display: flex; height: 113px; border-bottom: 1px solid #d5d6d8; background: #f5f6f7; }
.group { display: flex; flex-direction: column; justify-content: space-between; margin: 3px 0; border-right: 1px solid #dfe0e1; }
.tools { display: flex; padding: 1px 0 0 5px; }
.caption { height: 18px; color: #5c5c5c; line-height: 18px; text-align: center; }
.g-clip { width: 125px; } .g-image { width: 141px; } .g-tools { width: 96px; } .g-brush { width: 62px; } .g-shapes { width: 286px; } .g-size { width: 62px; } .g-colors { width: 435px; } .g-3d { width: 66px; }
.g-clip .caption, .g-tools .caption { padding-right: 2px; }
.g-image .tools { padding-left: 4px; }
.g-brush .tools, .g-size .tools { padding-left: 0; }
.g-3d .tools { padding-left: 2px; }
.big { display: flex; flex-direction: column; align-items: center; height: 83px; line-height: 19px; white-space: nowrap; border: 1px solid transparent; }
.big em { font-style: normal; line-height: 16px; }
.w50 { width: 50px; } .w46 { width: 46px; } .w58 { width: 58px; } .w60 { width: 60px; }
.active { border-color: #62a2e4; background: #c9e0f7; }
.pic { display: flex; align-items: center; justify-content: center; width: 100%; height: 44px; }
.split { border-bottom: 1px solid #62a2e4; }
.tri { width: 7px; height: 4px; margin-top: 5px; }
.tri.side { margin: -3px 0 0 5px; }
.stack { display: flex; flex-direction: column; height: 80px; padding-left: 3px; }
.g-clip .stack { padding-left: 5px; }
.stack > span { display: flex; align-items: center; gap: 3px; height: 26px; white-space: nowrap; }
.stack .side { margin-left: 3px; }
.off { color: #8f8f8f; }
.toolgrid { display: grid; grid-template-columns: repeat(3, 20px); gap: 16px 8px; padding: 14px 0 0 10px; }
.toolgrid svg { width: 20px; height: 20px; }
.glyph { color: #263f6a; font: bold 26px/20px "Liberation Serif", serif; }
.gallery { display: flex; height: 75px; margin-top: 3px; border: 1px solid #d7dade; background: #fbfcfd; }
.gscroll { display: flex; flex-direction: column; align-items: center; justify-content: space-between; width: 18px; padding: 10px 0; border-left: 1px solid #d7dade; background: #f5f6f7; color: #3c4c68; }
.gscroll .tri { margin: 0; }
.up { width: 7px; height: 4px; transform: rotate(180deg); color: #aaa; }
.outline { padding-left: 5px; }
.sw { display: block; border: 1px solid #808080; }
.color1 { width: 40px; height: 40px; box-shadow: inset 0 0 0 2px #c9e0f7; background: #000; }
.color2 { width: 30px; height: 30px; background: #fff; }
.palette { display: grid; grid-template-columns: repeat(10, 25px); gap: 2px 2.200px; height: 80px; margin: 1px 9px 0 5px; }
.palette i { height: 25px; border: 1px solid #a0a0a0; box-shadow: inset 0 0 0 1px #fff; }
.palette .e { box-shadow: none; }
.rainbow { width: 36px; height: 37px; border: 1px solid #8f9296; box-shadow: inset 0 0 0 1px #fff; background: linear-gradient(transparent 20%, #888), linear-gradient(90deg, #f00, #ff0 18%, #0f0 34%, #0ff 50%, #00f 67%, #f0f 84%, #f00); }
.workspace { display: flex; height: 807px; background: linear-gradient(#c5cfe1, #dce7f4); }
.picture { width: 1894px; height: 802px; margin: 5px 0 0 5px; overflow: hidden; border-top: 1px solid #000; background: #fff; }
.status { display: flex; height: 32px; border-top: 1px solid #d7d7d7; background: #f0f0f0; color: #111; font-size: 14.2px; }
.cell { display: flex; align-items: center; gap: 5px; width: 200px; padding-left: 4px; border-right: 1px solid #d9d9d9; white-space: nowrap; }
.c4 { padding-left: 6px; }
.c5 { width: 876px; }
.zoom { display: flex; align-items: center; gap: 7px; padding-left: 24px; font-size: 13.8px; letter-spacing: -.3px; }
.taskbar { display: flex; height: 50px; background: linear-gradient(90deg, #454033, #403929 45%, #352d21); color: #fff; }
.start { display: flex; align-items: center; justify-content: center; width: 60px; }
.search { display: flex; align-items: center; gap: 14px; width: 429px; padding-left: 14px; border: 1px solid #c8c8c8; background: #f2f2f2; color: #333; font-size: 17.6px; }
.apps { display: flex; padding-left: 8px; }
.app { display: flex; align-items: center; justify-content: center; width: 52px; height: 50px; margin-right: 10.100px; padding-top: 3px; border-bottom: 3px solid transparent; }
.app svg { width: 30px; height: 30px; }
.on { border-bottom-color: #76b9ed; }
.multi { border-image: linear-gradient(90deg, #76b9ed 78%, #5b8fba 78%) 3; }
.hot { width: 62px; margin: 0 5px 0 -5px; border-bottom-color: #76b9ed; background: linear-gradient(90deg, #69645b 93%, #55503f 93%); }
.ico { fill: #fff; font: bold 14px "Open Sans", sans-serif; }
.tray { display: flex; align-items: center; width: 258px; margin: 0 5px 0 auto; border-right: 1px solid #777; }
.clock { width: 90px; margin-left: 8px; font-size: 14.2px; line-height: 23px; text-align: center; letter-spacing: -.1px; }
.action { margin-left: 8px; }
```
